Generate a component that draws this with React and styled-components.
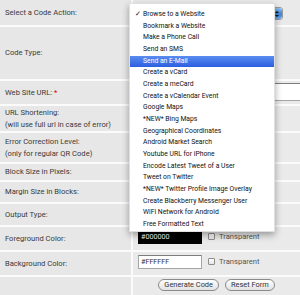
import React from 'react';
import styled, { createGlobalStyle } from 'styled-components';

const Global = createGlobalStyle`
  html, body { margin: 0; padding: 0; background: #fff; }
  body { font-family: Roboto, "Liberation Sans", Arial, sans-serif; }
`;

const Page = styled.div`
  position: relative;
  width: 300px;
  height: 295px;
  overflow: hidden;
  background: #fbfbfb;
`;

const Table = styled.div`
  display: flex;
  flex-direction: column;
  gap: 2px;
`;

const Row = styled.div`
  display: grid;
  grid-template-columns: 131px 1fr;
  column-gap: 2px;
  height: ${(p) => p.$h}px;
`;

const Label = styled.div`
  background: #e7e7e7;
  color: #3a3a3a;
  font-size: 7.6px;
  line-height: 11.5px;
  padding-left: 5px;
  display: flex;
  flex-direction: column;
  justify-content: center;
`;

const Req = styled.span`
  color: #d40000;
`;

const Value = styled.div`
  background: #eaeaea;
  display: flex;
  align-items: flex-start;
  justify-content: ${(p) => (p.$center ? 'center' : 'flex-start')};
  padding: ${(p) => p.$pad || '3px 0 0 5px'};
  gap: 6px;
  overflow: hidden;
`;

const SelectBox = styled.div`
  margin-left: 2px;
  width: 143px;
  height: 13px;
  flex: none;
  background: #fff;
  border: 1px solid #9a9a9a;
  border-radius: 3px;
  box-sizing: border-box;
  display: flex;
  justify-content: flex-end;
`;

const SelectArrow = styled.div`
  width: 10px;
  height: 100%;
  border-radius: 0 3px 3px 0;
  background: linear-gradient(#8fc0f2, #3d86dc 55%, #6aa9ec);
  display: flex;
  flex-direction: column;
  align-items: center;
  justify-content: center;
  gap: 2px;
  &::before, &::after {
    content: '';
    width: 0;
    height: 0;
    border-left: 2px solid transparent;
    border-right: 2px solid transparent;
  }
  &::before { border-bottom: 2px solid #111; }
  &::after { border-top: 2px solid #111; }
`;

const TextInput = styled.div`
  flex: none;
  width: ${(p) => p.$w}px;
  height: ${(p) => p.$hgt || 14}px;
  box-sizing: border-box;
  border: 1px solid ${(p) => (p.$dark ? '#000' : '#a5a5a5')};
  border-top-color: ${(p) => (p.$dark ? '#000' : '#7d7d7d')};
  background: ${(p) => (p.$dark ? '#000' : '#fff')};
  color: ${(p) => (p.$dark ? '#fff' : '#333')};
  font-size: 7.2px;
  line-height: 12px;
  padding-left: 2px;
`;

const Check = styled.label`
  display: flex;
  align-items: center;
  gap: 4px;
  margin-top: 2px;
  font-size: 7.6px;
  color: #555;
`;

const Box = styled.span`
  width: 7px;
  height: 7px;
  box-sizing: border-box;
  border: 1px solid #8d8d8d;
  border-radius: 1px;
  background: linear-gradient(#fff, #e4e4e4);
`;

const Button = styled.button`
  font-family: inherit;
  font-size: 7.4px;
  color: #333;
  height: 12px;
  padding: 0 5px;
  margin: 0;
  border: 1px solid #8a8a8a;
  border-radius: 6px;
  background: linear-gradient(#ffffff, #e2e2e2);
  line-height: 10px;
`;

const Menu = styled.ul`
  position: absolute;
  left: 129px;
  top: 3px;
  width: 146px;
  height: 229px;
  box-sizing: border-box;
  margin: 0;
  padding: 5px 0 0 0;
  list-style: none;
  background: #fff;
  border: 1px solid rgba(0, 0, 0, 0.12);
  box-shadow: 0 3px 7px rgba(0, 0, 0, 0.35);
  font-size: 6.8px;
  color: #111;
`;

const Item = styled.li`
  position: relative;
  height: 11.67px;
  line-height: 11.67px;
  padding-left: 13px;
  white-space: nowrap;
  ${(p) =>
    p.$active &&
    `
    background: linear-gradient(#5a8cf0, #2c5fe0);
    color: #fff;
  `}
`;

const Tick = styled.span`
  position: absolute;
  left: 5px;
  top: 0;
  font-size: 6.5px;
`;

const items = [
  'Browse to a Website',
  'Bookmark a Website',
  'Make a Phone Call',
  'Send an SMS',
  'Send an E-Mail',
  'Create a vCard',
  'Create a meCard',
  'Create a vCalendar Event',
  'Google Maps',
  '*NEW* Bing Maps',
  'Geographical Coordinates',
  'Android Market Search',
  'Youtube URL for iPhone',
  'Encode Latest Tweet of a User',
  'Tweet on Twitter',
  '*NEW* Twitter Profile Image Overlay',
  'Create Blackberry Messenger User',
  'WiFi Network for Android',
  'Free Formatted Text',
];

export default function App() {
  return (
    <Page>
      <Global />
      <Table>
        <Row $h={25}>
          <Label>Select a Code Action:</Label>
          <Value $pad="7px 0 0 5px">
            <SelectBox>
              <SelectArrow />
            </SelectBox>
          </Value>
        </Row>
        <Row $h={52}>
          <Label>Code Type:</Label>
          <Value />
        </Row>
        <Row $h={23}>
          <Label>
            <span>
              Web Site URL: <Req>*</Req>
            </span>
          </Label>
          <Value $pad="2px 0 0 5px">
            <TextInput $w={200} $hgt={18} />
          </Value>
        </Row>
        <Row $h={25}>
          <Label>
            <span>URL Shortening:</span>
            <span>(will use full url in case of error)</span>
          </Label>
          <Value />
        </Row>
        <Row $h={29}>
          <Label>
            <span>Error Correction Level:</span>
            <span>(only for regular QR Code)</span>
          </Label>
          <Value />
        </Row>
        <Row $h={16}>
          <Label>Block Size in Pixels:</Label>
          <Value />
        </Row>
        <Row $h={20}>
          <Label>Margin Size in Blocks:</Label>
          <Value />
        </Row>
        <Row $h={21}>
          <Label>Output Type:</Label>
          <Value />
        </Row>
        <Row $h={23}>
          <Label>Foreground Color:</Label>
          <Value>
            <TextInput $w={64} $dark>#000000</TextInput>
            <Check>
              <Box />
              Transparent
            </Check>
          </Value>
        </Row>
        <Row $h={23}>
          <Label>Background Color:</Label>
          <Value>
            <TextInput $w={64}>#FFFFFF</TextInput>
            <Check>
              <Box />
              Transparent
            </Check>
          </Value>
        </Row>
        <Row $h={20}>
          <Label />
          <Value $center $pad="2px 0 0 0">
            <Button>Generate Code</Button>
            <Button>Reset Form</Button>
          </Value>
        </Row>
      </Table>
      <Menu>
        {items.map((t, i) => (
          <Item key={t} $active={i === 4}>
            {i === 0 && <Tick>✓</Tick>}
            {t}
          </Item>
        ))}
      </Menu>
    </Page>
  );
}
